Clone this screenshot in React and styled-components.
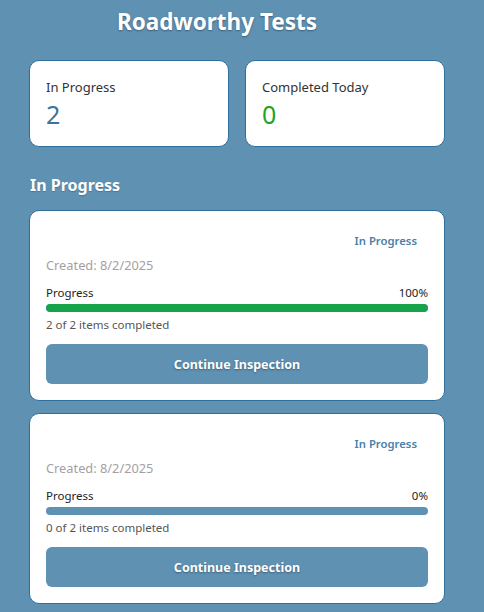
import React from "react";
import styled, { createGlobalStyle } from "styled-components";

const GlobalStyle = createGlobalStyle`
  body {
    margin: 0;
    background: #5f91b3;
    font-family: "Noto Sans", "Open Sans", sans-serif;
  }
`;

const inspections = [
  { id: 1, created: "8/2/2025", done: 2, total: 2 },
  { id: 2, created: "8/2/2025", done: 0, total: 2 },
];

const App = () => {
  return (
    <Page>
      <GlobalStyle />
      <Header>Roadworthy Tests</Header>
      <Stats>
        <StatCard>
          <StatLabel>In Progress</StatLabel>
          <StatValue>2</StatValue>
        </StatCard>
        <StatCard>
          <StatLabel>Completed Today</StatLabel>
          <StatValue green>0</StatValue>
        </StatCard>
      </Stats>
      <SectionTitle>In Progress</SectionTitle>
      <List>
        {inspections.map((item) => {
          const pct = Math.round((item.done / item.total) * 100);
          return (
            <Card key={item.id}>
              <CardTop>
                <Badge>In Progress</Badge>
              </CardTop>
              <Created>Created: {item.created}</Created>
              <ProgressRow>
                <span>Progress</span>
                <span>{pct}%</span>
              </ProgressRow>
              <Track>
                <Fill style={{ width: `${pct}%` }} />
              </Track>
              <Items>
                {item.done} of {item.total} items completed
              </Items>
              <Button>Continue Inspection</Button>
            </Card>
          );
        })}
      </List>
    </Page>
  );
};

export default App;

const Page = styled.div`
  width: 416px;
  padding: 6px 0 20px 29px;
`;

const Header = styled.h1`
  margin: 0;
  padding-right: 40px;
  text-align: center;
  color: #fff;
  font-size: 22.5px;
  line-height: 32px;
  font-weight: 700;
  text-shadow: 0 1px 2px rgba(0, 0, 0, 0.35);
`;

const Stats = styled.div`
  display: grid;
  grid-template-columns: 1fr 1fr;
  gap: 16px;
  margin-top: 22px;
`;

const StatCard = styled.div`
  background: #fff;
  border: 1px solid #2f6f9c;
  border-radius: 10px;
  padding: 16px 16px 14px;
  box-sizing: border-box;
  height: 87px;
`;

const StatLabel = styled.div`
  font-size: 13px;
  line-height: 20px;
  color: #333;
`;

const StatValue = styled.div`
  font-size: 25px;
  line-height: 32px;
  margin-top: 1px;
  color: ${(props) => (props.green ? "#1fa51f" : "#3a75a2")};
`;

const SectionTitle = styled.h2`
  margin: 25px 0 12px 1px;
  color: #fff;
  font-size: 16px;
  line-height: 26px;
  font-weight: 700;
  text-shadow: 0 1px 1px rgba(0, 0, 0, 0.2);
`;

const List = styled.div`
  display: flex;
  flex-direction: column;
  gap: 12px;
`;

const Card = styled.div`
  background: #fff;
  border: 1px solid #2f6f9c;
  border-radius: 10px;
  padding: 16px 16px 16px;
`;

const CardTop = styled.div`
  display: flex;
  justify-content: flex-end;
`;

const Badge = styled.span`
  padding: 6px 11px;
  font-size: 11.3px;
  line-height: 16px;
  font-weight: 600;
  color: #4a80ab;
`;

const Created = styled.div`
  margin-top: 2px;
  font-size: 12.8px;
  line-height: 16px;
  color: #a59fa3;
`;

const ProgressRow = styled.div`
  display: flex;
  justify-content: space-between;
  margin-top: 12px;
  font-size: 11.5px;
  line-height: 16px;
  color: #222;
`;

const Track = styled.div`
  margin-top: 3px;
  height: 8px;
  border-radius: 4px;
  background: #5f91b3;
  overflow: hidden;
`;

const Fill = styled.div`
  height: 100%;
  background: #16a34a;
  border-radius: 4px;
`;

const Items = styled.div`
  margin-top: 5px;
  font-size: 11.5px;
  line-height: 16px;
  color: #555;
`;

const Button = styled.button`
  display: block;
  width: 100%;
  height: 40px;
  margin-top: 11px;
  border: none;
  border-radius: 6px;
  background: #5f91b3;
  color: #fff;
  font-family: inherit;
  font-size: 12.5px;
  font-weight: 700;
  text-shadow: 0 1px 2px rgba(0, 0, 0, 0.35);
  cursor: pointer;
`;
